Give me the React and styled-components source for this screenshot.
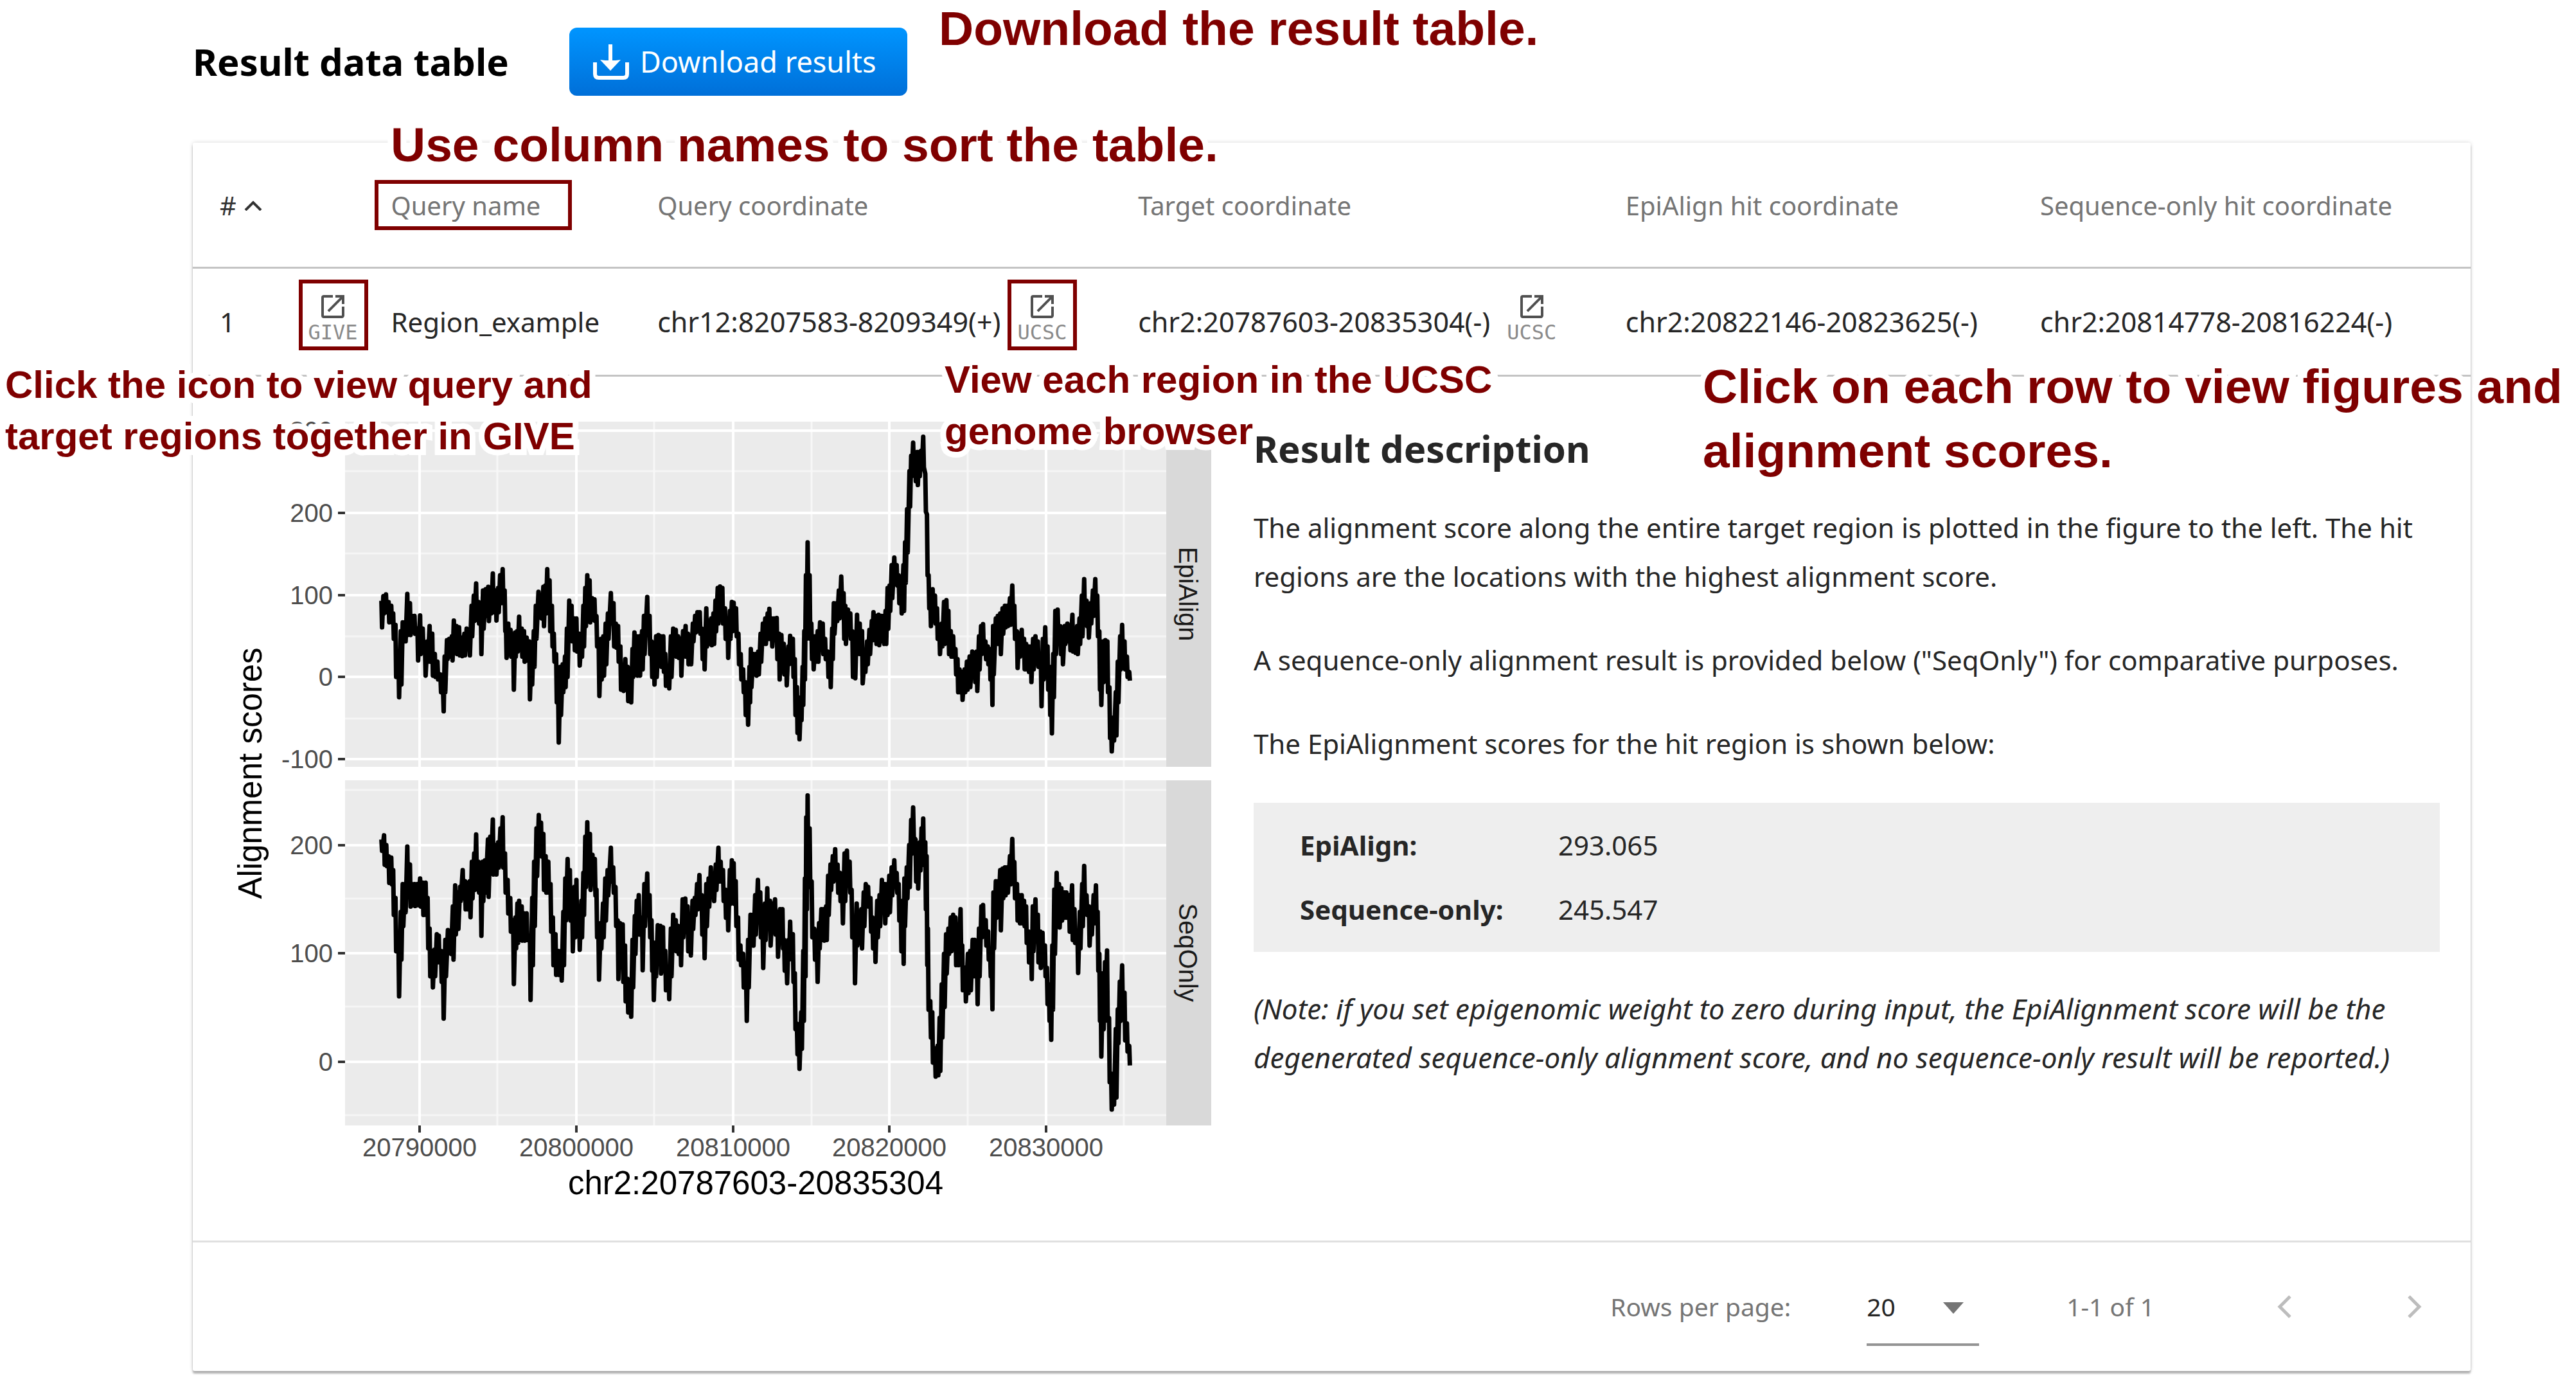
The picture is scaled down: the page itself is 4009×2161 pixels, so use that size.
import React, { useState } from "react";
import styled, { createGlobalStyle } from "styled-components";

const MAROON = "#7f0000";

const GlobalStyle = createGlobalStyle`
  *, *::before, *::after { box-sizing: border-box; }
  body {
    margin: 0;
    background: #fff;
    color: #262626;
    font-family: "Noto Sans", "Open Sans", sans-serif;
    font-size: 42px;
  }
  button, select { font: inherit; color: inherit; }
`;

/* ---------- page frame ---------- */

const Page = styled.main`
  position: relative;
  padding: 43px 164px 28px 300px;
  overflow: hidden;
`;

const TopBar = styled.header`
  display: flex;
  align-items: center;
  gap: 94px;
  margin-bottom: 73px;
`;

const Title = styled.h2`
  margin: 0;
  font-size: 58px;
  line-height: 80px;
  font-weight: 700;
  color: #000;
`;

const DownloadButton = styled.button`
  display: flex;
  align-items: center;
  gap: 16px;
  height: 106px;
  padding: 0 48px 0 36px;
  border: 0;
  border-radius: 12px;
  background: linear-gradient(#0095ff, #006fd8);
  color: #fff;
  font-size: 45px;
  line-height: 60px;
  cursor: pointer;

  svg { width: 58px; height: 58px; }
`;

const Card = styled.section`
  background: #fff;
  border-radius: 3px;
  box-shadow: 0 4px 3px rgba(0, 0, 0, 0.28), 0 0 6px rgba(0, 0, 0, 0.16);
`;

/* ---------- result table ---------- */

const Table = styled.table`
  width: 100%;
  table-layout: fixed;
  border-collapse: separate;
  border-spacing: 0;
`;

const Col = styled.col`
  width: ${(p) => p.$share}%;
`;

const HeadCell = styled.th`
  height: 196px;
  padding: 0 0 0 ${(p) => p.$inset || 0}px;
  border-bottom: 3px solid #c4c4c4;
  text-align: left;
  vertical-align: middle;
  font-weight: 400;
`;

const SortButton = styled.button`
  position: relative;
  display: inline-flex;
  align-items: center;
  gap: 12px;
  padding: 0;
  border: 0;
  background: none;
  font-size: 40px;
  line-height: 56px;
  white-space: nowrap;
  color: ${(p) => (p.$active ? "#333" : "#757575")};
  cursor: pointer;

  svg { width: 28px; height: 16px; }
`;

const Cell = styled.td`
  height: 168px;
  padding: 0 0 0 ${(p) => p.$inset || 0}px;
  border-bottom: 3px solid #c4c4c4;
  vertical-align: middle;
  font-size: ${(p) => (p.$coordinate ? 43 : 42)}px;
  line-height: 56px;
  white-space: nowrap;
`;

const Coordinate = styled.div`
  display: flex;
  align-items: center;
  gap: 26px;
`;

const BrowserLink = styled.a`
  position: relative;
  display: inline-flex;
  flex-direction: column;
  align-items: center;
  padding-bottom: 16px;
  vertical-align: middle;
  color: #8a8a8a;
  font-family: "DejaVu Sans Mono", monospace;
  font-size: 32px;
  line-height: 32px;
  text-decoration: none;

  svg { width: 48px; height: 48px; fill: #505050; }
`;

const Highlight = styled.span`
  position: absolute;
  top: ${(p) => p.$top}px;
  left: ${(p) => p.$left}px;
  width: ${(p) => p.$width}px;
  height: ${(p) => p.$height}px;
  border: 6px solid ${MAROON};
  pointer-events: none;
`;

const DetailCell = styled.td`
  padding: 54px 48px 50px 42px;
  border-bottom: 3px solid #e0e0e0;
`;

const Detail = styled.div`
  display: flex;
  align-items: flex-start;
  gap: 61px;
`;

const Figure = styled.figure`
  flex: 0 0 1548px;
  margin: 0;

  svg { display: block; width: 100%; }
`;

const Description = styled.article`
  flex: 1;
  min-width: 0;
  padding-top: 18px;
`;

const DescriptionTitle = styled.h3`
  margin: 0 0 45px;
  font-size: 58px;
  line-height: 80px;
  font-weight: 700;
`;

const Paragraph = styled.p`
  margin: 0 0 54px;
  font-size: ${(p) => (p.$note ? 44 : 42)}px;
  font-style: ${(p) => (p.$note ? "italic" : "normal")};
  line-height: 76px;
`;

const Scores = styled.dl`
  display: grid;
  grid-template-columns: 402px 1fr;
  margin: 0 0 50px;
  padding: 16px 72px;
  background: #eee;
  line-height: 100px;

  dt { font-weight: 700; }
  dd { margin: 0; }
`;

/* ---------- pagination ---------- */

const Pagination = styled.footer`
  display: flex;
  align-items: center;
  justify-content: flex-end;
  height: 200px;
  padding-right: 39px;
  color: #757575;
  font-size: 39px;
  line-height: 56px;
`;

const SelectBox = styled.div`
  position: relative;
  width: 175px;
  margin: 0 136px 0 118px;

  select {
    width: 100%;
    height: 122px;
    padding: 4px 0 0;
    border: 0;
    border-bottom: 4px solid #949494;
    border-radius: 0;
    background: none;
    appearance: none;
    color: #262626;
  }

  svg {
    position: absolute;
    top: 54px;
    right: 24px;
    width: 32px;
    height: 18px;
    fill: #757575;
    pointer-events: none;
  }
`;

const Pager = styled.nav`
  display: flex;
  gap: 107px;
  margin-left: 154px;
`;

const PagerButton = styled.button`
  display: grid;
  place-items: center;
  width: 96px;
  height: 96px;
  padding: 0;
  border: 0;
  background: none;

  svg {
    width: 22px;
    height: 36px;
    fill: none;
    stroke: #bdbdbd;
    stroke-width: 5;
  }
`;

/* ---------- guide notes laid over the page ---------- */

const Note = styled.p`
  position: absolute;
  top: ${(p) => p.$top}px;
  left: ${(p) => p.$left}px;
  margin: 0;
  color: ${MAROON};
  font-family: "Liberation Sans", Arial, sans-serif;
  font-weight: 700;
  font-size: ${(p) => (p.$small ? 60 : 75)}px;
  line-height: ${(p) => (p.$small ? 80 : 100)}px;
  white-space: nowrap;
  -webkit-text-stroke: 18px #fff;
  paint-order: stroke fill;
  pointer-events: none;
`;

/* ---------- icons ---------- */

const DownloadIcon = () => (
  <svg viewBox="0 0 58 58" fill="none" stroke="#fff" strokeWidth="6" aria-hidden="true">
    <path d="M4 30V48Q4 54 10 54H48Q54 54 54 48V30" />
    <path d="M28 2V36" />
    <path d="M12 26L20 27H36L44 26L28 43Z" fill="#fff" stroke="none" />
  </svg>
);

const OpenIcon = () => (
  <svg viewBox="0 0 24 24" aria-hidden="true">
    <path d="M19 19H5V5h7V3H5a2 2 0 0 0-2 2v14a2 2 0 0 0 2 2h14c1.1 0 2-.9 2-2v-7h-2v7zM14 3v2h3.590l-9.830 9.830 1.410 1.410L19 6.410V10h2V3h-7z" />
  </svg>
);

const SortIcon = () => (
  <svg viewBox="0 0 28 16" fill="none" stroke="#333" strokeWidth="4" aria-hidden="true">
    <path d="M2 15L14 3L26 15" />
  </svg>
);

/* ---------- alignment score chart ---------- */

// Each sample is "position,high,low"; every trace comes in two tiles.
const EPI_A = `497,740,855 503,722,800 511,715,795 519,745,835 527,760,835 533,790,900 540,835,1050 549,950,1130 556,860,1080 562,825,910 569,825,910 576,713,885 584,750,885 591,800,870 598,800,880 607,850,985 615,798,960 623,850,940 630,920,1045 637,900,990 644,840,990 652,870,1045 660,950,1050 668,980,1060 677,1030,1110 685,1090,1185 690,960,1110 697,895,980 704,890,970 712,880,985 718,818,950 726,840,960 734,845,965 742,885,968 750,870,965 757,850,940 765,855,965 772,760,890 779,720,830 786,672,825 793,745,840 800,760,960 807,700,860 815,695,810 823,685,830 830,690,800 837,633,795 846,700,828 853,690,795 859,640,760 867,616,760 873,700,870 877,830,975 884,830,940 891,855,970 899,900,1100 905,865,970 911,860,950 917,803,935 925,850,970 932,860,990 940,885,985 948,900,1138 955,930,1080 962,860,1010 968,760,900 976,705,800 984,740,820 991,685,850 997,680,800 1003,616,760 1010,660,870 1017,760,930 1023,870,990 1030,950,1150 1036,1080,1308 1043,1000,1200 1050,990,1110 1057,960,1090 1063,850,1050 1070,740,900 1077,760,910 1085,810,945 1092,810,950 1100,870,1005 1107,890,970 1113,760,930 1119,690,850 1125,640,800 1132,660,835 1140,730,825 1147,735,830 1153,800,930 1160,920,1125 1167,890,1060 1174,880,1045 1181,830,1000 1188,790,900 1197,710,840 1205,750,930 1212,830,935 1219,840,990 1226,920,1100 1234,1000,1105 1241,970,1080 1248,1000,1145 1257,1020,1150 1263,930,1050 1269,865,1040 1276,880,1045 1284,880,1045 1292,860,1020 1298,800,960 1308,725,870 1315,800,960 1321,900,1050 1328,940,1080 1335,880,1050 1342,875,1000 1349,880,1010 1357,880,1030 1363,950,1085 1373,1010,1095 1380,880,1050 1387,850,960 1395,855,970 1402,880,975 1410,890,1045 1417,860,970 1425,840,970 1432,870,1000 1440,880,1000 1447,830,910 1454,800,875 1461,785,870 1468,785,880 1475,850,980 1481,880,1020 1488,770,930 1495,820,920 1503,810,925 1510,790,920 1516,740,870 1523,690,840 1530,684,800 1537,690,840 1545,770,900 1553,810,975 1560,780,900 1566,745,870`;

const EPI_B = `80,748,860 87,770,890 94,870,1000 101,950,1060 108,1010,1110 114,1060,1200 121,1120,1238 127,1000,1150 131,930,1090 138,950,1030 146,950,1045 153,940,1040 160,870,990 167,830,920 174,810,920 181,790,900 186,772,900 193,810,930 200,810,900 208,808,980 215,870,1060 222,875,990 229,910,1040 236,960,1083 243,920,1000 248,878,970 256,890,1050 262,970,1200 268,1080,1270 274,1160,1295 280,1120,1220 285,1000,1160 290,860,1060 295,640,900 300,510,760 306,640,900 311,830,980 316,880,1020 323,880,990 330,860,990 337,825,940 345,830,960 352,890,980 360,940,1050 367,960,1090 373,850,980 378,750,880 386,750,830 393,700,820 400,645,740 407,710,900 412,760,920 420,775,870 427,790,900 433,860,1050 440,880,1055 447,795,960 455,830,960 462,860,1075 470,960,1030 477,900,1000 484,855,960 491,820,900 496,785,905 503,800,920 511,795,925 519,800,910 526,800,920 532,780,920 538,690,860 544,680,790 550,600,740 558,570,650 565,600,690 571,640,760 578,660,800 585,600,790 590,510,680 596,380,560 603,230,380 608,170,260 614,118,225 620,160,280 626,155,295 632,155,260 638,150,230 644,95,225 650,240,400 655,400,650 660,640,780 665,720,850 672,695,800 679,720,840 685,770,900 692,840,960 699,830,930 706,745,920 713,738,850 719,780,960 726,860,970 733,880,970 740,930,1040 746,970,1110 752,1010,1110 759,1020,1140 767,1010,1110 774,980,1100 782,960,1090 790,940,1050 797,945,1070 803,940,1105 810,880,1020 816,840,960 822,832,940 829,900,980 836,920,1000 842,930,1060 848,1000,1160 852,840,1040 860,810,910 866,800,920 873,790,960 880,770,880 887,760,855 894,760,850 902,730,845 909,680,800 915,760,900 923,860,1015 930,870,970 937,855,960 944,890,1020 950,910,1020 957,920,1030 964,920,1070 971,890,1020 978,880,990 985,900,1010 994,970,1165 1000,890,1060 1007,845,970 1014,920,1100 1020,1000,1200 1025,1100,1272 1031,950,1130 1037,780,960 1044,775,890 1052,840,960 1058,860,1000 1065,840,920 1073,830,910 1080,840,945 1088,795,950 1095,850,955 1102,840,960 1109,810,920 1116,720,890 1123,655,800 1130,740,850 1135,780,895 1142,750,840 1149,700,810 1156,655,780 1162,720,890 1168,860,1100 1172,980,1160 1179,900,1070 1186,895,1000 1192,900,1110 1198,1080,1290 1203,1230,1343 1210,1200,1300 1217,1100,1280 1223,980,1150 1230,880,1020 1236,835,970 1243,900,1020 1250,960,1050 1257,1020,1065`;

const SEQ_A = `497,240,290 505,225,340 512,260,345 519,300,405 527,305,410 533,350,520 540,450,650 549,600,812 556,500,680 562,400,560 569,400,510 576,265,440 584,330,490 591,400,485 598,400,488 606,400,485 615,380,490 623,395,520 632,395,520 638,450,640 644,560,740 652,640,780 659,635,740 666,580,690 672,585,690 679,640,760 685,700,892 692,600,740 700,565,650 708,570,660 715,480,680 722,405,590 730,430,570 737,410,470 745,350,460 752,390,500 759,395,500 767,390,528 773,320,460 780,290,430 786,222,370 793,320,440 800,400,595 806,320,470 813,315,440 822,240,455 829,230,370 837,168,375 846,260,375 853,250,350 860,200,320 867,160,350 874,290,440 882,385,515 890,450,580 899,530,768 906,520,640 912,470,620 917,460,610 925,480,612 932,505,612 940,505,610 950,590,825 957,450,700 963,320,560 970,200,380 977,152,285 984,180,310 991,220,430 998,300,440 1006,320,440 1013,400,580 1020,520,700 1028,580,735 1036,640,735 1045,640,755 1052,500,700 1058,380,540 1065,310,440 1072,350,540 1079,440,650 1086,410,600 1092,385,570 1100,500,645 1107,460,600 1113,360,520 1119,230,420 1125,178,370 1133,220,430 1141,295,400 1148,310,450 1153,420,600 1159,570,752 1166,540,640 1173,470,600 1180,380,540 1187,350,450 1197,270,400 1204,340,440 1211,410,560 1218,530,750 1225,540,690 1233,545,760 1240,620,830 1248,740,870 1257,780,885 1263,600,780 1270,515,660 1276,460,560 1282,440,590 1292,520,718 1299,400,560 1308,362,500 1315,440,600 1321,530,720 1326,640,825 1333,610,740 1340,548,680 1348,550,730 1356,555,720 1363,640,790 1373,700,822 1380,560,740 1387,510,620 1395,530,650 1402,550,660 1409,570,700 1416,455,600 1424,452,560 1431,480,650 1439,540,665 1446,460,570 1453,450,520 1460,400,500 1467,368,490 1474,440,590 1481,520,675 1488,400,560 1495,380,490 1502,340,440 1510,370,470 1517,330,430 1525,270,400 1532,320,400 1539,350,470 1546,420,530 1553,450,575 1560,350,480 1566,315,430`;

const SEQ_B = `80,325,480 86,390,560 93,520,680 100,620,700 108,650,780 117,740,900 123,600,780 130,510,630 137,510,630 144,440,590 152,385,500 159,430,600 166,560,710 173,470,610 180,415,540 188,460,630 196,470,560 203,455,590 210,500,670 218,490,610 225,490,640 230,600,720 237,680,765 243,600,680 248,535,640 256,580,760 262,720,930 268,900,1020 274,960,1072 281,860,1000 287,640,900 292,380,740 296,160,500 300,82,380 306,200,420 312,390,600 320,560,680 328,640,760 334,540,640 341,490,610 348,490,612 355,480,610 361,370,520 368,330,430 375,300,400 382,275,390 389,330,440 396,360,470 403,430,550 410,290,470 417,280,390 425,320,440 431,420,600 439,520,765 446,470,630 453,500,620 460,490,640 467,430,560 473,400,490 480,410,490 487,450,580 493,520,640 500,560,688 507,460,600 514,440,560 521,385,510 529,400,550 536,400,520 543,370,510 550,340,450 558,315,400 565,360,440 571,400,540 577,460,650 584,500,695 588,380,560 595,340,460 602,260,420 608,170,300 614,125,240 621,240,400 627,260,425 634,250,360 639,200,340 644,165,340 650,250,500 654,300,700 658,560,860 665,820,960 671,860,1050 679,990,1100 687,980,1095 693,880,1080 699,760,960 706,650,850 712,580,730 719,560,660 726,520,650 733,510,640 740,520,700 747,560,700 755,490,680 760,620,790 769,700,830 777,650,800 784,640,790 791,600,740 797,600,740 804,680,840 810,560,740 817,480,600 822,475,590 830,530,630 837,570,680 843,640,740 848,700,858 853,430,640 860,390,530 866,390,520 873,350,575 880,345,460 887,340,450 894,340,440 902,300,410 909,238,350 915,320,460 923,400,540 930,440,550 937,440,550 944,460,560 950,480,620 957,570,690 965,600,750 970,480,650 978,455,570 985,510,690 992,570,710 999,575,700 1006,620,740 1012,700,840 1018,760,900 1023,840,968 1028,620,860 1034,420,660 1041,360,480 1048,400,565 1055,415,540 1063,430,530 1070,430,530 1078,440,580 1087,405,610 1094,490,620 1103,580,728 1110,500,640 1117,400,560 1123,335,460 1130,440,520 1137,480,630 1144,500,590 1151,440,550 1158,405,550 1163,500,720 1168,650,900 1172,760,1028 1179,720,930 1185,680,800 1191,638,900 1197,880,1120 1203,1080,1218 1210,1100,1200 1217,920,1175 1223,850,980 1229,750,900 1236,692,860 1243,790,970 1250,900,1010 1257,980,1060`;

function tracePoints(samples, x0, y0, sx, sy) {
  return samples
    .trim()
    .split(/\s+/)
    .map((sample) => {
      const [x, high, low] = sample.split(",").map(Number);
      const px = x0 + x / sx;
      const top = y0 + high / sy + 2;
      const bottom = y0 + low / sy - 2;
      return `${px.toFixed(1)},${top.toFixed(1)} ${(px + 1).toFixed(1)},${bottom.toFixed(1)}`;
    })
    .join(" ");
}

const PANELS = [
  {
    name: "EpiAlign",
    top: 656,
    major: [
      [300, 670],
      [200, 798],
      [100, 926],
      [0, 1053],
      [-100, 1181],
    ],
    minor: [733, 861, 990, 1118],
    trace: `${tracePoints(EPI_A, 340, 640, 1.96, 2.529)} ${tracePoints(EPI_B, 1100, 640, 1.912, 2.529)}`,
  },
  {
    name: "SeqOnly",
    top: 1214,
    major: [
      [200, 1315],
      [100, 1483],
      [0, 1652],
    ],
    minor: [1229, 1398, 1566, 1735],
    trace: `${tracePoints(SEQ_A, 340, 1200, 1.96, 2.306)} ${tracePoints(SEQ_B, 1100, 1200, 1.912, 2.306)}`,
  },
];

const X_MAJOR = [
  [20790000, 653],
  [20800000, 897],
  [20810000, 1141],
  [20820000, 1384],
  [20830000, 1628],
];
const X_MINOR = [774, 1018, 1263, 1506, 1749];

const ChartText = styled.text`
  font-family: "Liberation Sans", Arial, sans-serif;
  font-size: ${(p) => p.$size || 40}px;
  fill: ${(p) => p.$color || "#4d4d4d"};
  text-anchor: ${(p) => p.$anchor || "middle"};
`;

function ScoreChart() {
  return (
    <svg viewBox="342 640 1548 1240" role="img" aria-label="Alignment scores along the target region">
      {PANELS.map((panel) => (
        <g key={panel.name}>
          <rect x="537" y={panel.top} width="1278" height="537" fill="#ebebeb" />
          <rect x="1815" y={panel.top} width="70" height="537" fill="#d9d9d9" />
          {panel.minor.map((y) => (
            <path key={y} d={`M537 ${y}H1815`} stroke="#f5f5f5" strokeWidth="3" />
          ))}
          {X_MINOR.map((x) => (
            <path key={x} d={`M${x} ${panel.top}v537`} stroke="#f7f7f7" strokeWidth="3" />
          ))}
          {panel.major.map(([value, y]) => (
            <g key={value}>
              <path d={`M537 ${y}H1815`} stroke="#fff" strokeWidth="4" />
              <path d={`M526 ${y}h11`} stroke="#333" strokeWidth="4" />
              <ChartText x="518" y={y + 14} $anchor="end">
                {value}
              </ChartText>
            </g>
          ))}
          {X_MAJOR.map(([value, x]) => (
            <path key={value} d={`M${x} ${panel.top}v537`} stroke="#fff" strokeWidth="4" />
          ))}
          <polyline points={panel.trace} fill="none" stroke="#000" strokeWidth="7" strokeLinejoin="round" />
          <ChartText $color="#1a1a1a" transform={`translate(1835 ${panel.top + 268}) rotate(90)`}>
            {panel.name}
          </ChartText>
        </g>
      ))}
      {X_MAJOR.map(([value, x]) => (
        <g key={value}>
          <path d={`M${x} 1751v11`} stroke="#333" strokeWidth="4" />
          <ChartText x={x} y="1799">
            {value}
          </ChartText>
        </g>
      ))}
      <ChartText $size={51} $color="#000" x="1176" y="1858">
        chr2:20787603-20835304
      </ChartText>
      <ChartText $size={51} $color="#000" transform="translate(407 1203) rotate(-90)">
        Alignment scores
      </ChartText>
    </svg>
  );
}

/* ---------- page ---------- */

function ExternalLink({ label, marked }) {
  return (
    <BrowserLink href="#">
      <OpenIcon />
      {label}
      {marked && <Highlight $top={-18} $left={-15} $width={108} $height={110} />}
    </BrowserLink>
  );
}

const COLUMN_SHARES = [4.5, 4.2, 11.7, 21.1, 21.4, 18.2, 18.9];

export default function App() {
  const [rowsPerPage, setRowsPerPage] = useState("20");

  return (
    <>
      <GlobalStyle />
      <Page>
        <TopBar>
          <Title>Result data table</Title>
          <DownloadButton type="button">
            <DownloadIcon />
            Download results
          </DownloadButton>
        </TopBar>

        <Card>
          <Table>
            <colgroup>
              {COLUMN_SHARES.map((share, i) => (
                <Col key={i} $share={share} />
              ))}
            </colgroup>
            <thead>
              <tr>
                <HeadCell $inset={42}>
                  <SortButton type="button" $active>
                    #
                    <SortIcon />
                  </SortButton>
                </HeadCell>
                <HeadCell />
                <HeadCell>
                  <SortButton type="button">
                    Query name
                    <Highlight $top={-12} $left={-25} $width={307} $height={78} />
                  </SortButton>
                </HeadCell>
                <HeadCell>
                  <SortButton type="button">Query coordinate</SortButton>
                </HeadCell>
                <HeadCell>
                  <SortButton type="button">Target coordinate</SortButton>
                </HeadCell>
                <HeadCell>
                  <SortButton type="button">EpiAlign hit coordinate</SortButton>
                </HeadCell>
                <HeadCell>
                  <SortButton type="button">Sequence-only hit coordinate</SortButton>
                </HeadCell>
              </tr>
            </thead>
            <tbody>
              <tr>
                <Cell $inset={42}>1</Cell>
                <Cell $inset={20}>
                  <ExternalLink label="GIVE" marked />
                </Cell>
                <Cell>Region_example</Cell>
                <Cell $coordinate>
                  <Coordinate>
                    chr12:8207583-8209349(+)
                    <ExternalLink label="UCSC" marked />
                  </Coordinate>
                </Cell>
                <Cell $coordinate>
                  <Coordinate>
                    chr2:20787603-20835304(-)
                    <ExternalLink label="UCSC" />
                  </Coordinate>
                </Cell>
                <Cell $coordinate>chr2:20822146-20823625(-)</Cell>
                <Cell $coordinate>chr2:20814778-20816224(-)</Cell>
              </tr>
              <tr>
                <DetailCell colSpan={7}>
                  <Detail>
                    <Figure>
                      <ScoreChart />
                    </Figure>
                    <Description>
                      <DescriptionTitle>Result description</DescriptionTitle>
                      <Paragraph>
                        The alignment score along the entire target region is plotted in the figure to the left. The
                        hit regions are the locations with the highest alignment score.
                      </Paragraph>
                      <Paragraph>
                        A sequence-only alignment result is provided below ("SeqOnly") for comparative purposes.
                      </Paragraph>
                      <Paragraph>The EpiAlignment scores for the hit region is shown below:</Paragraph>
                      <Scores>
                        <dt>EpiAlign:</dt>
                        <dd>293.065</dd>
                        <dt>Sequence-only:</dt>
                        <dd>245.547</dd>
                      </Scores>
                      <Paragraph $note>
                        (Note: if you set epigenomic weight to zero during input, the EpiAlignment score will be the
                        degenerated sequence-only alignment score, and no sequence-only result will be reported.)
                      </Paragraph>
                    </Description>
                  </Detail>
                </DetailCell>
              </tr>
            </tbody>
          </Table>

          <Pagination>
            <label htmlFor="rows-per-page">Rows per page:</label>
            <SelectBox>
              <select id="rows-per-page" value={rowsPerPage} onChange={(e) => setRowsPerPage(e.target.value)}>
                <option value="10">10</option>
                <option value="20">20</option>
                <option value="50">50</option>
              </select>
              <svg viewBox="0 0 32 18" aria-hidden="true">
                <path d="M0 0H32L16 18Z" />
              </svg>
            </SelectBox>
            <span>1-1 of 1</span>
            <Pager aria-label="Result pages">
              <PagerButton type="button" aria-label="Previous page">
                <svg viewBox="0 0 22 36">
                  <path d="M20 2L4 18L20 34" />
                </svg>
              </PagerButton>
              <PagerButton type="button" aria-label="Next page">
                <svg viewBox="0 0 22 36">
                  <path d="M2 2L18 18L2 34" />
                </svg>
              </PagerButton>
            </Pager>
          </Pagination>
        </Card>

        <Note $top={-6} $left={1461}>
          Download the result table.
        </Note>
        <Note $top={175} $left={608}>
          Use column names to sort the table.
        </Note>
        <Note $small $top={559} $left={8}>
          Click the icon to view query and
          <br />
          target regions together in GIVE
        </Note>
        <Note $small $top={551} $left={1470}>
          View each region in the UCSC
          <br />
          genome browser
        </Note>
        <Note $top={551} $left={2650}>
          Click on each row to view figures and
          <br />
          alignment scores.
        </Note>
      </Page>
    </>
  );
}
